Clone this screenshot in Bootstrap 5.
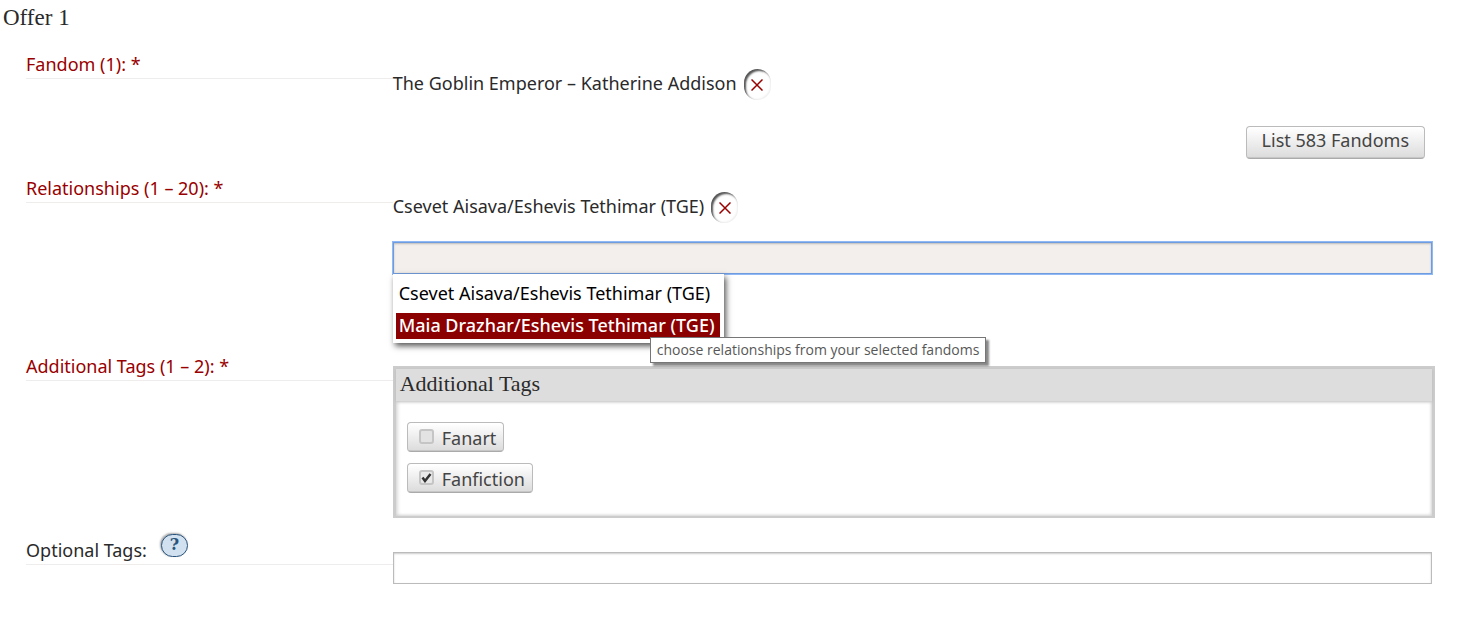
<!DOCTYPE html>
<html lang="en">
<head>
<meta charset="utf-8">
<meta name="viewport" content="width=device-width, initial-scale=1">
<title>Offer 1</title>
<link href="https://cdn.jsdelivr.net/npm/bootstrap@5.3.0/dist/css/bootstrap.min.css" rel="stylesheet">
<style>
  body { font-family: "Noto Sans", "Open Sans", sans-serif; font-size: 18px; line-height: 27px; color: #2a2a2a; }
  .offer-title { font-family: "Liberation Serif", serif; font-size: 23px; line-height: 35px; padding-left: 3px; margin-bottom: 16px; }
  .offer { padding: 0 24px 0 26px; }
  .form-line { display: grid; grid-template-columns: 19fr 54fr; }
  .form-line > div { min-width: 0; }
  .line-label { border-bottom: 1px solid #efedeb; align-self: start; height: 28px; }
  .required { color: #900; }
  .line-body { padding-top: 18px; }
  .line-body.inset-end { padding-right: 3px; }
  .fandom-line { height: 124px; }
  .relation-line { height: 178px; }
  .relation-line .line-body { padding-top: 17px; }
  .extra-line { height: 184px; }
  .extra-line .line-body { padding-top: 13px; }
  .optional-line .line-body { padding-top: 15px; }
  .chosen { height: 31px; gap: 7px; }
  .chosen span { padding-bottom: 2px; }
  .remove { width: 27px; height: 31px; padding: 0; border: 0; border-radius: 14px; background: #fff; box-shadow: inset 2px 2px 2px #555, inset -1px -1px 2px #eee; }
  .remove svg { display: block; margin: 0 auto; }
  .soft-btn { background: linear-gradient(#fff 2%, #ddd 95%, #bbb 100%); border: 1px solid #bbb; border-bottom-color: #aaa; border-radius: 4px; color: #444; }
  .list-btn { height: 33px; line-height: 27px; padding: 0 15px 4px; margin: 26px 7px 0 0; }
  .tag-input { display: block; width: 100%; height: 32px; border: 1px solid #bbb; background: #fff; box-shadow: inset 0 1px 2px #ccc; outline: 0; padding: 0 6px; }
  .tag-input.active-field { height: 32px; border-color: #6f9bdf; background: #f3efec; box-shadow: inset 0 1px 2px #bbb, 0 0 0 1px #8fb8f5; }
  .field-wrap { margin-top: 19px; }
  .suggest { position: absolute; top: 100%; left: 0; width: 331px; padding: 7px 4px 4px 3px; background: #fff; box-shadow: 2px 3px 6px #555; z-index: 2; color: #000; white-space: nowrap; }
  .suggest li { height: 26px; line-height: 25px; padding-left: 3px; }
  .suggest li + li { margin-top: 6px; background: #8b0000; color: #fff; font-weight: 500; }
  .hint { position: absolute; top: 95px; left: 257px; height: 26px; padding: 0 6px; border: 1px solid #767676; background: #fff; box-shadow: 3px 3px 2px #888; font: 14px/23px "Open Sans", sans-serif; color: #575757; white-space: nowrap; z-index: 3; }
  .tag-panel { border: 3px solid #ccc; border-bottom-width: 2px; height: 152px; box-shadow: inset 1px 1px 4px #ccc, inset -1px -1px 3px #ddd; }
  .tag-panel h2 { font-family: "Liberation Serif", serif; font-size: 22px; line-height: 29px; height: 32px; padding-left: 4px; background: #ddd; box-shadow: 0 1px 3px #bbb; margin-bottom: 21px; }
  .tag-choice { height: 30px; width: fit-content; gap: 8px; margin-left: 11px; padding: 2px 7px 0 11px; margin-bottom: 11px; }
  .tick { appearance: none; width: 15px; height: 15px; margin: 0 0 4px; border: 2px solid #c5c5c5; border-radius: 3px; background: #e3e3e3; }
  .tick:checked { background: #e9e9e9 url("data:image/svg+xml,%3Csvg xmlns='http://www.w3.org/2000/svg' viewBox='0 0 11 11'%3E%3Cpath d='M1.5 5.5 4 9 9.5 2' fill='none' stroke='%23333' stroke-width='2.5'/%3E%3C/svg%3E") center / 11px no-repeat; }
  .help { width: 27px; height: 23px; border: 1px solid #2a547c; border-radius: 12px; background: #d1e1ef; color: #2a547c; font: bold 16px/20px "DejaVu Serif", serif; text-align: center; text-decoration: none; box-shadow: -1px -1px 2px #aaa; margin: -3px 0 0 14px; }
</style>
</head>
<body>
<main>
  <h1 class="offer-title fw-normal">Offer 1</h1>
  <form class="offer">
    <div class="form-line fandom-line">
      <div class="line-label required">Fandom (1): *</div>
      <div class="line-body inset-end">
        <div class="chosen d-flex align-items-center"><span>The Goblin Emperor – Katherine Addison</span>
          <button type="button" class="remove" aria-label="Remove fandom"><svg width="12" height="12" viewBox="0 0 12 12"><path d="M.5.5l11 11M11.5.5l-11 11" stroke="#900" stroke-width="1.5"/></svg></button>
        </div>
        <div class="d-flex justify-content-end"><button type="button" class="soft-btn list-btn">List 583 Fandoms</button></div>
      </div>
    </div>
    <div class="form-line relation-line">
      <div class="line-label required"><label for="relationships">Relationships (1 – 20): *</label></div>
      <div class="line-body inset-end">
        <div class="chosen d-flex align-items-center"><span>Csevet Aisava/Eshevis Tethimar (TGE)</span>
          <button type="button" class="remove" aria-label="Remove relationship"><svg width="12" height="12" viewBox="0 0 12 12"><path d="M.5.5l11 11M11.5.5l-11 11" stroke="#900" stroke-width="1.5"/></svg></button>
        </div>
        <div class="field-wrap position-relative">
          <input type="text" id="relationships" class="tag-input active-field">
          <ul class="suggest list-unstyled mb-0">
            <li>Csevet Aisava/Eshevis Tethimar (TGE)</li>
            <li>Maia Drazhar/Eshevis Tethimar (TGE)</li>
          </ul>
          <div class="hint" role="tooltip">choose relationships from your selected fandoms</div>
        </div>
      </div>
    </div>
    <div class="form-line extra-line">
      <div class="line-label required">Additional Tags (1 – 2): *</div>
      <div class="line-body">
        <div class="tag-panel">
          <h2 class="fw-normal">Additional Tags</h2>
          <label class="tag-choice soft-btn d-flex align-items-center"><input type="checkbox" class="tick"><span>Fanart</span></label>
          <label class="tag-choice soft-btn d-flex align-items-center"><input type="checkbox" class="tick" checked><span>Fanfiction</span></label>
        </div>
      </div>
    </div>
    <div class="form-line optional-line">
      <div class="line-label d-flex align-items-start"><label for="optional">Optional Tags:</label><a href="#" class="help" aria-label="Help">?</a></div>
      <div class="line-body inset-end"><input type="text" id="optional" class="tag-input"></div>
    </div>
  </form>
</main>
<script src="https://cdn.jsdelivr.net/npm/bootstrap@5.3.0/dist/js/bootstrap.bundle.min.js"></script>
</body>
</html>
